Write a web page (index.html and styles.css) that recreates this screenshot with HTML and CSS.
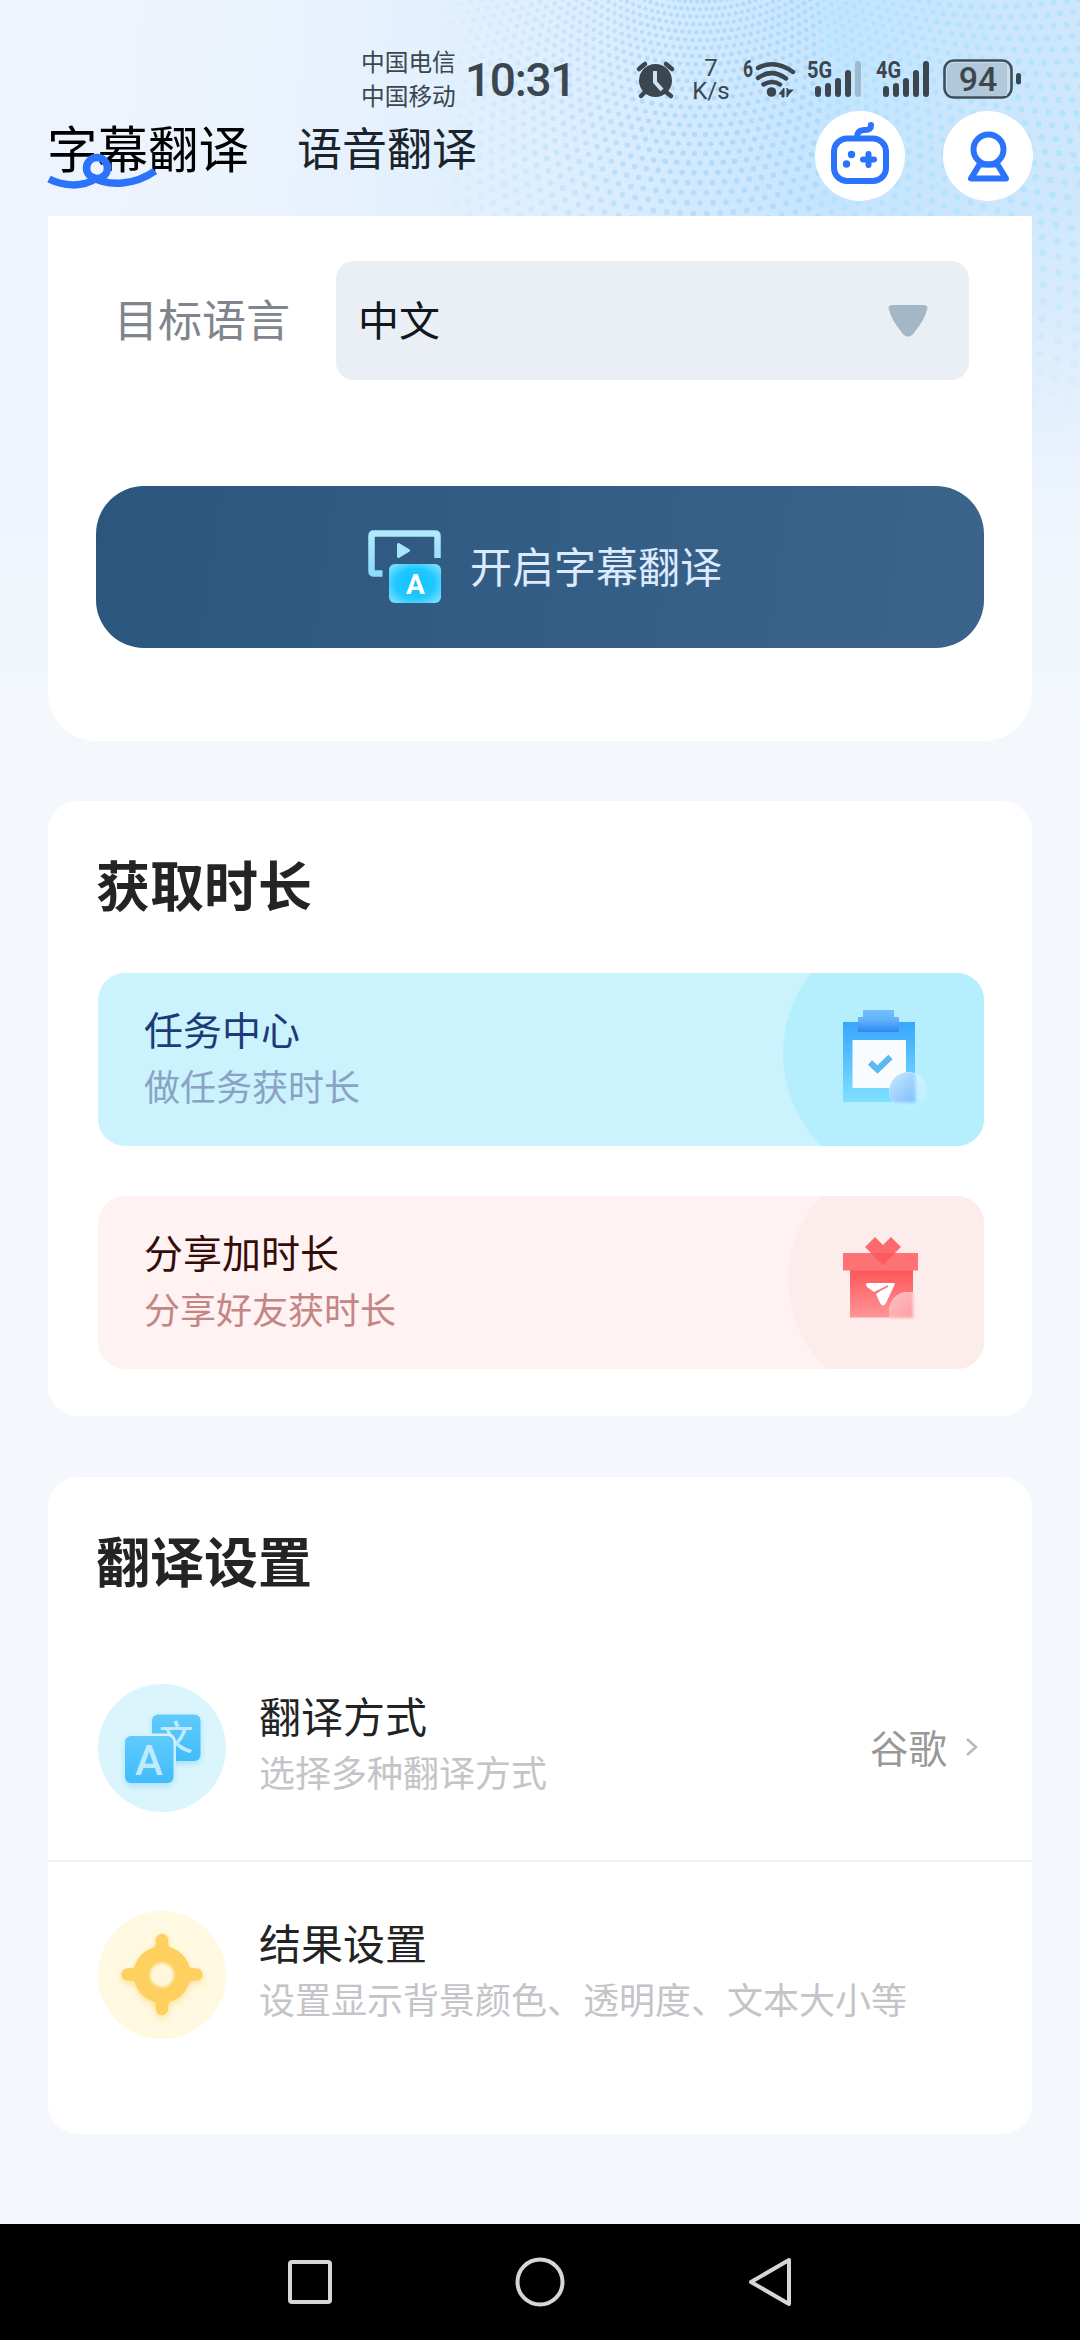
FILE: index.html
```html
<!DOCTYPE html>
<html lang="zh-CN">
<head>
    <meta charset="UTF-8">
    <meta name="viewport" content="width=device-width, initial-scale=1.0">
    <title>字幕翻译</title>
    <link rel="stylesheet" href="styles.css">
</head>
<body>
<div class="phone">
    <svg class="dots" id="dots" width="1080" height="460" viewBox="0 0 1080 460"></svg>

    <!-- Status bar -->
    <header class="status">
        <div class="carriers">
            <span>中国电信</span>
            <span>中国移动</span>
        </div>
        <div class="clock">10:31</div>
        <svg class="status-icons" width="400" height="60" viewBox="630 50 400 60">
            <!-- alarm -->
            <g fill="none" stroke="#3b464e" stroke-width="4.5" stroke-linecap="round">
                <path d="M639 69l6-5M672 69l-6-5M645 92l-4 4M666 92l5 4"/>
            </g>
            <circle cx="655.5" cy="80.5" r="16.5" fill="#3b464e"/>
            <path d="M655 71v11l7 8" fill="none" stroke="#c9e3f8" stroke-width="4"/>
            <!-- network speed -->
            <text class="speed" x="711" y="76">7</text>
            <text class="speed" x="711" y="99">K/s</text>
            <!-- wifi -->
            <text class="net" x="743" y="77" textLength="10" lengthAdjust="spacingAndGlyphs">6</text>
            <g fill="none" stroke="#3b464e" stroke-width="4.5" stroke-linecap="round">
                <path d="M758 68q16.500-9 35 4M758 78q13.500-10 28 .5M763.500 84.500q9-5 16.500 0"/>
            </g>
            <circle cx="771.5" cy="92" r="4.8" fill="#3b464e"/>
            <path d="M784 88v9h-2v-3h-3zM787 88v9l2-3 4-4h-5z" fill="#3b464e" stroke="#3b464e"/>
            <!-- 5G -->
            <text class="net" x="807" y="78" textLength="25" lengthAdjust="spacingAndGlyphs">5G</text>
            <g stroke="#3b464e" stroke-width="6" stroke-linecap="round">
                <path d="M818 89v5M828 86v8M838 81v13M848 73v21"/>
                <path d="M858 64v30" stroke="#9dbace"/>
            </g>
            <!-- 4G -->
            <text class="net" x="876" y="78" textLength="25" lengthAdjust="spacingAndGlyphs">4G</text>
            <path d="M886 89v5M896 86v8M906 81v13M916 73v21M926 64v30" stroke="#3b464e" stroke-width="6" stroke-linecap="round"/>
            <!-- battery -->
            <rect x="944.5" y="60.5" width="67" height="37" rx="9" fill="#c6dff2" stroke="#3f4d57" stroke-width="2.6"/>
            <path d="M954 63h53v33h-53q-7 0-7-7V70q0-7 7-7z" fill="#b1c7da"/>
            <text class="battery" x="978" y="91">94</text>
            <path d="M1018.500 75.500v6.500" stroke="#3b464e" stroke-width="5" stroke-linecap="round"/>
        </svg>
    </header>

    <!-- Tabs -->
    <nav class="tabs">
        <a class="tab active">字幕翻译
            <svg class="swirl" width="112" height="40" viewBox="0 0 112 40" fill="none" stroke="#2b73fb" stroke-width="7.5">
                <path d="M3 28c14 7 33 9 48-1M46 26c17 10 43 8 63-6"/>
                <circle cx="51" cy="17" r="10.5"/>
            </svg>
        </a>
        <a class="tab">语音翻译</a>
        <div class="round-btn">
            <svg width="90" height="90" viewBox="0 0 90 90" fill="none" stroke="#2b73fb" stroke-width="6">
                <rect x="19" y="27.500" width="52" height="42.500" rx="13"/>
                <path d="M42 27c0-7 4-8 8-8 5 0 6-2 6-5" stroke-linecap="round"/>
                <g fill="#2b73fb" stroke="none">
                    <circle cx="36.500" cy="43.500" r="3.700"/>
                    <circle cx="31.500" cy="53" r="3.700"/>
                </g>
                <path d="M48 48.500h11M53.500 43v11" stroke-linecap="round"/>
            </svg>
        </div>
        <div class="round-btn">
            <svg width="90" height="90" viewBox="0 0 90 90" fill="none" stroke="#2b73fb" stroke-width="6" stroke-linejoin="round">
                <circle cx="45.500" cy="38.500" r="15"/>
                <path d="M36.500 53.500L28 67.500h35l-8.500-14z"/>
            </svg>
        </div>
    </nav>

    <!-- Target language -->
    <section class="card card-lang">
        <div class="lang-row">
            <span class="lang-label">目标语言</span>
            <div class="select">
                <span>中文</span>
                <svg width="42" height="34" viewBox="0 0 42 34">
                    <path d="M5 5q-1-1 0-1h32q1 0 0 1-1 8-13 23-3 3-6 0Q6 13 5 5z" fill="#a4b7c6" stroke="#a4b7c6" stroke-width="6" stroke-linejoin="round"/>
                </svg>
            </div>
        </div>
        <div class="start-btn">
            <svg width="76" height="76" viewBox="0 0 76 76">
                <defs>
                    <linearGradient id="frame" x1="0" y1="0" x2="0" y2="1">
                        <stop offset="0" stop-color="#b2e9fe"/>
                        <stop offset="1" stop-color="#8bdcfa"/>
                    </linearGradient>
                    <radialGradient id="tile" r=".68">
                        <stop offset="0" stop-color="#0dc2ff"/>
                        <stop offset=".55" stop-color="#20c8ff"/>
                        <stop offset="1" stop-color="#86e4ff"/>
                    </radialGradient>
                </defs>
                <path d="M15.500 44.500H7q-2.500 0-2.500-2.500V7q0-2.500 2.500-2.500h61q2.500 0 2.500 2.500v22" fill="none" stroke="url(#frame)" stroke-width="6.500"/>
                <path d="M31.500 15.500v12l10-6z" fill="#a5e6fd" stroke="#a5e6fd" stroke-width="3" stroke-linejoin="round"/>
                <rect x="22" y="35" width="52" height="39" rx="6" fill="url(#tile)"/>
                <text class="tile-a" x="48.500" y="64.500">A</text>
            </svg>
            <span>开启字幕翻译</span>
        </div>
    </section>

    <!-- Get more time -->
    <section class="card card-time">
        <h2>获取时长</h2>
        <div class="banner blue">
            <div class="banner-text">
                <b>任务中心</b>
                <span>做任务获时长</span>
            </div>
            <svg class="banner-art" width="208" height="173" viewBox="776 973 208 173">
                <defs>
                    <linearGradient id="board" x1="0" y1="0" x2="0" y2="1">
                        <stop offset="0" stop-color="#38a6fd"/>
                        <stop offset="1" stop-color="#80e1fe"/>
                    </linearGradient>
                    <linearGradient id="clip" x1="0" y1="0" x2="0" y2="1">
                        <stop offset="0" stop-color="#72bdfd"/>
                        <stop offset=".45" stop-color="#62b2fc"/>
                        <stop offset="1" stop-color="#2f86f4"/>
                    </linearGradient>
                    <linearGradient id="bubble" x1="0" y1="0" x2="1" y2="1">
                        <stop offset="0" stop-color="#d8effe"/>
                        <stop offset="1" stop-color="#7dbffc"/>
                    </linearGradient>
                    <linearGradient id="halo" x1="0" y1="0" x2="0" y2="1">
                        <stop offset="0" stop-color="#d3f3fe"/>
                        <stop offset="1" stop-color="#b5effe"/>
                    </linearGradient>
                    <clipPath id="bubbleClip"><circle cx="908" cy="1091" r="18.500"/></clipPath>
                </defs>
                <circle cx="913" cy="1054" r="130" fill="#b5effe"/>
                <rect x="843" y="1022" width="72" height="80" fill="url(#board)"/>
                <path d="M863 1010h31v7h5v15h-41v-15h5z" fill="url(#clip)"/>
                <rect x="852.500" y="1040" width="53.500" height="48" fill="#f8fcff"/>
                <path d="M870 1062.500l7.500 7 13-12.500" fill="none" stroke="#5ab8f3" stroke-width="6"/>
                <circle cx="908" cy="1091" r="19" fill="url(#halo)"/>
                <g clip-path="url(#bubbleClip)">
                    <rect class="soft" x="880" y="1070" width="35.500" height="32.500" fill="url(#bubble)"/>
                </g>
            </svg>
        </div>
        <div class="banner pink">
            <div class="banner-text">
                <b>分享加时长</b>
                <span>分享好友获时长</span>
            </div>
            <svg class="banner-art" width="208" height="173" viewBox="776 1196 208 173">
                <defs>
                    <linearGradient id="box" x1="0" y1="0" x2="0" y2="1">
                        <stop offset="0" stop-color="#fc5559"/>
                        <stop offset="1" stop-color="#ff9596"/>
                    </linearGradient>
                    <linearGradient id="blush" x1="0" y1="0" x2="1" y2="1">
                        <stop offset="0" stop-color="#fdcfd0"/>
                        <stop offset="1" stop-color="#fd9da0"/>
                    </linearGradient>
                    <clipPath id="blushClip"><circle cx="908" cy="1311" r="19"/></clipPath>
                </defs>
                <circle cx="910" cy="1279" r="122" fill="#fdecec"/>
                <rect x="850" y="1269" width="63" height="48.500" fill="url(#box)"/>
                <rect x="843" y="1253" width="75" height="17.500" fill="#fd7274"/>
                <path d="M865 1247l10-10 8 8 8-8 10 10-18 18z" fill="#fd6a6d"/>
                <path d="M871 1253h24l-12 12z" fill="#fb5b5f"/>
                <path d="M869 1283h24q3 0 1 3l-8 17q-3 5-6 0l-4-9 10-7-12 5-7-5q-3-4 2-4z" fill="#fff"/>
                <path d="M876 1292l12-6" stroke="#fd7476" stroke-width="1.6"/>
                <circle cx="908" cy="1311" r="19" fill="#fdecec"/>
                <g clip-path="url(#blushClip)">
                    <rect class="soft" x="880" y="1284" width="33" height="34" fill="url(#blush)"/>
                </g>
            </svg>
        </div>
    </section>

    <!-- Translation settings -->
    <section class="card card-settings">
        <h2>翻译设置</h2>
        <div class="setting">
            <svg width="128" height="128" viewBox="98 1684 128 128">
                <defs>
                    <linearGradient id="sky" x1="0" y1="0" x2="0" y2="1">
                        <stop offset="0" stop-color="#5fcbfb"/>
                        <stop offset="1" stop-color="#41bcfa"/>
                    </linearGradient>
                </defs>
                <circle cx="162" cy="1748" r="64" fill="#dbf5fc"/>
                <g class="soft-blue">
                    <rect x="152" y="1714.500" width="48.500" height="46.500" rx="6" fill="url(#sky)"/>
                </g>
                <text class="glyph-wen" x="176" y="1750">文</text>
                <rect x="122.500" y="1733.500" width="53.500" height="52" rx="8" fill="#dbf5fc"/>
                <g class="soft-blue">
                    <rect x="125" y="1736" width="48.500" height="47" rx="6" fill="url(#sky)"/>
                </g>
                <text class="glyph-a" x="149" y="1775">A</text>
            </svg>
            <div class="setting-text">
                <b>翻译方式</b>
                <span>选择多种翻译方式</span>
            </div>
            <div class="setting-value">谷歌</div>
            <svg class="chevron" width="14" height="20" viewBox="0 0 14 20">
                <path d="M2 2l9 8-9 8" fill="none" stroke="#b9b9bb" stroke-width="2.5"/>
            </svg>
        </div>
        <div class="setting">
            <svg width="128" height="128" viewBox="98 1911 128 128">
                <circle cx="162" cy="1975" r="64" fill="#fef9e0"/>
                <g class="soft-yellow" fill="#fed060">
                    <path d="M162 1940v69M127.500 1974.500h69" stroke="#fed060" stroke-width="12.5" stroke-linecap="round"/>
                    <circle cx="162" cy="1974.5" r="28.5"/>
                    <path d="M152 1949q4-2 4-7h12q0 5 4 7zM152 2000q4 2 4 7h12q0-5 4-7zM136.500 1964.500q-2 4-7 4v12q5 0 7 4zM187.500 1964.500q2 4 7 4v12q-5 0-7 4z"/>
                </g>
                <circle class="soft" cx="162" cy="1975" r="12" fill="#fef7dc"/>
            </svg>
            <div class="setting-text">
                <b>结果设置</b>
                <span>设置显示背景颜色、透明度、文本大小等</span>
            </div>
        </div>
    </section>

    <!-- System navigation -->
    <footer class="navbar">
        <svg width="48" height="52" viewBox="0 0 48 52"><rect x="4" y="6" width="40" height="40" rx="2" /></svg>
        <svg width="52" height="52" viewBox="0 0 52 52"><circle cx="26" cy="26" r="22.500"/></svg>
        <svg width="48" height="52" viewBox="0 0 48 52"><path d="M43 4v44L5 26z"/></svg>
    </footer>
</div>
<script src="dots.js"></script>
</body>
</html>
```
FILE: styles.css
```css
body {
    margin: 0;
    font-family: "Noto Sans CJK SC", sans-serif;
}

h2 {
    margin: 0;
    font-size: 54px;
    line-height: 60px;
    font-weight: 700;
    color: #242424;
}

.phone {
    position: relative;
    width: 1080px;
    height: 2340px;
    display: flex;
    flex-direction: column;
    overflow: hidden;
    background:
        linear-gradient(180deg, rgba(244, 249, 253, 0) 0, rgba(240, 247, 253, 0) 200px, #eff5fd 520px, #f4f8fc 760px),
        linear-gradient(95deg, #eff4fd 0, #ebf3fd 20%, #dceefe 46%, #c4e4fe 66%, #cbe6fd 78%, #d6e9fd 100%);
}

.dots {
    position: absolute;
    top: 0;
    left: 0;
}

/* Status bar */
.status {
    position: relative;
    height: 110px;
    padding-left: 361px;
    display: flex;
    color: #3b464e;
}

.carriers {
    display: flex;
    flex-direction: column;
    width: 104px;
    padding-top: 44px;
    font-size: 23.7px;
    line-height: 34px;
}

.clock {
    width: 165px;
    padding-top: 51px;
    font-family: Roboto, sans-serif;
    font-size: 46px;
    font-weight: 500;
    line-height: 58px;
    letter-spacing: -1.3px;
}

.status-icons {
    margin-top: 50px;
}

.status-icons text {
    fill: #3b464e;
    font-family: Roboto, sans-serif;
}

.status-icons .speed {
    font-size: 24px;
    text-anchor: middle;
}

.status-icons .net {
    font-size: 23px;
    font-weight: 700;
}

.status-icons .battery {
    font-size: 34px;
    font-weight: 500;
    text-anchor: middle;
}

/* Tabs */
.tabs {
    position: relative;
    height: 106px;
    padding: 0 47px;
    display: flex;
}

.tab {
    width: 250px;
    font-size: 45px;
    line-height: 74px;
    white-space: nowrap;
    color: #1b232b;
}

.tab.active {
    position: relative;
    font-size: 50.5px;
    line-height: 73px;
    color: #000;
}

.swirl {
    position: absolute;
    left: -1px;
    top: 41px;
}

.round-btn {
    width: 90px;
    height: 90px;
    margin-top: 1px;
    border-radius: 50%;
    background-color: #fff;
}

.tab + .round-btn {
    margin-left: auto;
    margin-right: 38px;
}

/* Cards */
.card {
    position: relative;
    box-sizing: border-box;
    margin: 0 48px;
    border-radius: 30px;
    background-color: #fff;
}

.card-lang {
    height: 525px;
    padding: 45px 48px 0;
    border-radius: 0 0 48px 48px;
}

.lang-row {
    display: flex;
    align-items: center;
    height: 119px;
    padding: 0 15px 0 18px;
}

.lang-row span,
.start-btn span {
    padding-bottom: 5px;
}

.lang-label {
    width: 222px;
    font-size: 44px;
    color: #80858d;
}

.select {
    flex: 1;
    height: 119px;
    box-sizing: border-box;
    padding: 0 40px 0 22px;
    display: flex;
    align-items: center;
    justify-content: space-between;
    border-radius: 18px;
    background-color: #e9eff5;
    font-size: 41px;
    color: #12161d;
}

.start-btn {
    height: 162px;
    margin-top: 106px;
    display: flex;
    align-items: center;
    justify-content: center;
    gap: 27px;
    border-radius: 48px;
    background: linear-gradient(98deg, #2b567d, #3b648b);
    font-size: 42px;
    color: #dceafe;
}

.start-btn svg {
    margin-left: 9px;
}

.tile-a {
    fill: #fff;
    font-family: Roboto, sans-serif;
    font-size: 28px;
    font-weight: 700;
    text-anchor: middle;
}

.card-time {
    height: 615px;
    margin-top: 60px;
    padding: 53px 48px 0 50px;
}

.card-time h2 {
    text-indent: -2px;
}

.banner {
    height: 173px;
    margin-top: 59px;
    display: flex;
    justify-content: space-between;
    overflow: hidden;
    border-radius: 27px;
}

.banner + .banner {
    margin-top: 50px;
}

.banner-text,
.setting-text {
    display: flex;
    flex-direction: column;
}

.banner-text {
    padding: 26px 0 0 46px;
}

.banner b {
    font-size: 39px;
    font-weight: 400;
    line-height: 58px;
}

.banner span {
    font-size: 36px;
    line-height: 56px;
}

.blue {
    background-color: #caf3fd;
}

.blue b {
    color: #1d3b78;
}

.blue span {
    color: #8ba2c4;
}

.pink {
    background-color: #fff2f2;
}

.pink b {
    color: #350d08;
}

.pink span {
    color: #c48684;
}

.card-settings {
    height: 657px;
    margin-top: 61px;
    padding-top: 53px;
}

.card-settings h2 {
    padding: 0 48px 46px;
}

.setting {
    display: flex;
    align-items: center;
    box-sizing: border-box;
    height: 226px;
    padding: 0 50px;
    border-bottom: 2px solid #f0f0f1;
}

.setting:last-child {
    border-bottom: none;
}

.setting-text {
    margin-left: 33px;
    padding-bottom: 13px;
}

.setting b {
    font-size: 42px;
    font-weight: 400;
    line-height: 58px;
    color: #232323;
}

.setting span {
    font-size: 36px;
    line-height: 54px;
    color: #c4c4c8;
}

.setting-value {
    margin-left: auto;
    padding-bottom: 5px;
    font-size: 38.5px;
    color: #98989a;
}

.chevron {
    margin: 0 3px 2px 18px;
}

.soft-blue {
    filter: drop-shadow(0 3px 3px rgba(65, 188, 250, 0.35));
}

.soft-yellow {
    filter: drop-shadow(0 3px 3px rgba(254, 200, 80, 0.45));
}

.soft {
    filter: blur(1.5px);
}

.glyph-a {
    fill: #bfeafd;
    font-family: Roboto, sans-serif;
    font-size: 42px;
    font-weight: 500;
    text-anchor: middle;
}

.glyph-wen {
    fill: #bfeafd;
    font-size: 34px;
    font-weight: 500;
    text-anchor: middle;
}

/* System navigation */
.navbar {
    height: 116px;
    margin-top: auto;
    display: flex;
    align-items: center;
    justify-content: center;
    gap: 180px;
    background-color: #000;
}

.navbar svg {
    fill: none;
    stroke: #d6d6d6;
    stroke-width: 4;
    stroke-linejoin: round;
}
```
FILE: dots.js
```javascript
// Halftone dots: fan out from a point above the clock, growing with distance
const svg = document.getElementById('dots');
const cx = 700, cy = -170;
let html = '';

for (let ring = 0, r = 150; r < 700; ring++) {
    const size = 1.4 + r / 260;
    for (let a = -20; a < 200; a += 2) {
        const angle = (a + ring) * Math.PI / 180;
        const x = cx + Math.cos(angle) * r;
        const y = cy + Math.sin(angle) * r;
        // fade towards the left and the bottom
        const fade = Math.min(1, (x - 430) / 230) * Math.min(1, (420 - y) / 260);
        if (y < -4 || fade <= 0) continue;
        const color = x > 820 ? '#a2e2fa' : '#9dd0f7';
        html += `<circle cx="${x.toFixed(1)}" cy="${y.toFixed(1)}" r="${size.toFixed(1)}" fill="${color}" opacity="${(fade * 0.6).toFixed(2)}"/>`;
    }
    r += 5 + r / 70;
}

svg.innerHTML = html;
```
